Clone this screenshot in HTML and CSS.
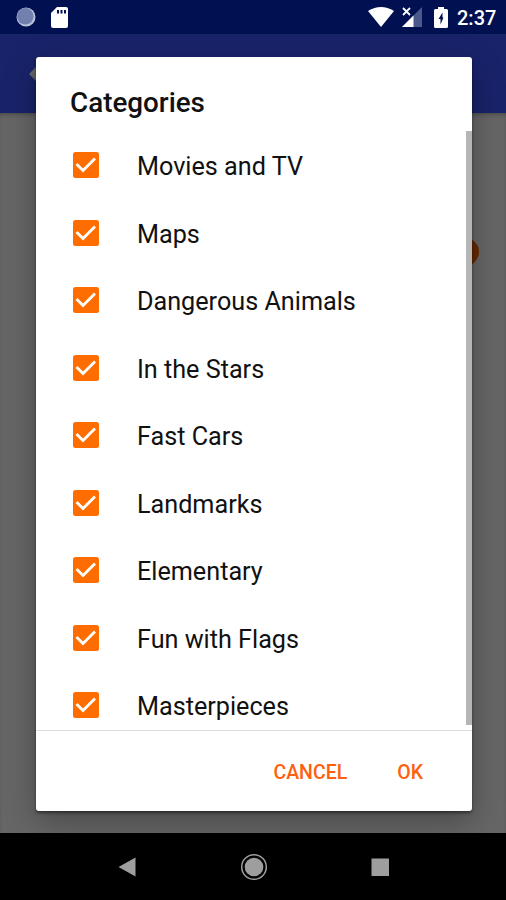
FILE: index.html
```html
<!DOCTYPE html>
<html lang="en">
<head>
<meta charset="utf-8">
<title>Categories</title>
<link rel="stylesheet" href="styles.css">
</head>
<body>
<div class="screen">
  <header class="status">
    <svg class="sync" viewBox="0 0 20 20"><circle cx="10" cy="10" r="9.5" fill="#b9c2dc"/><circle cx="9.3" cy="9.3" r="8.3" fill="#7280ad"/></svg>
    <svg class="sd" viewBox="0 0 17 21"><path d="M6 0h9q2 0 2 2v17q0 2-2 2H2q-2 0-2-2V6z" fill="#fff"/><path d="M6 3h2v3.500H6zM9.500 3h2v3.500h-2zM13 3h2v3.500h-2z" fill="#001051"/></svg>
    <span class="gap"></span>
    <svg class="wifi" viewBox="0 0 26 20"><path d="M0 4Q13-4 26 4L13 20z" fill="#fff"/></svg>
    <svg class="signal" viewBox="0 0 20 20"><path d="M20 0v20H0z" fill="#4a588c"/><path d="M11.500 8.500V20H0z" fill="#fff"/><path d="M1 1l7 7M8 1L1 8" stroke="#fff" stroke-width="1.800"/></svg>
    <svg class="battery" viewBox="0 0 14 21"><path d="M4 0h6v2h2.500Q14 2 14 3.500v16q0 1.500-1.500 1.500h-11Q0 21 0 19.500v-16Q0 2 1.500 2H4z" fill="#fff"/><path d="M8.500 5.500L4.500 12h2v5.500L9.500 10.500H8.500z" fill="#001051"/></svg>
    <span class="clock">2:37</span>
  </header>
  <div class="appbar"><svg class="back" viewBox="0 0 24 24"><path d="M11 3L2 12l9 9z" fill="#666"/></svg></div>
  <main class="page"><span class="toggle"></span></main>
  <nav class="navbar">
    <svg viewBox="0 0 28 28"><path d="M5.500 14L22.500 4.500v19z" fill="#9e9e9e"/></svg>
    <svg viewBox="0 0 28 28"><circle cx="14" cy="14" r="12.300" fill="none" stroke="#9e9e9e" stroke-width="1.500"/><circle cx="14" cy="14" r="9.300" fill="#9e9e9e"/></svg>
    <svg viewBox="0 0 28 28"><path d="M5.500 5.500h17.500v17.500H5.500z" fill="#9e9e9e"/></svg>
  </nav>
  <section class="dialog">
    <h1>Categories</h1>
    <div class="scroll">
      <ul>
        <li><svg class="check" viewBox="0 0 26 26"><rect width="26" height="26" rx="2.500"/><path d="M3.500 12l6.500 6.500L22 6.500"/></svg><span>Movies and TV</span></li>
        <li><svg class="check" viewBox="0 0 26 26"><rect width="26" height="26" rx="2.500"/><path d="M3.500 12l6.500 6.500L22 6.500"/></svg><span>Maps</span></li>
        <li><svg class="check" viewBox="0 0 26 26"><rect width="26" height="26" rx="2.500"/><path d="M3.500 12l6.500 6.500L22 6.500"/></svg><span>Dangerous Animals</span></li>
        <li><svg class="check" viewBox="0 0 26 26"><rect width="26" height="26" rx="2.500"/><path d="M3.500 12l6.500 6.500L22 6.500"/></svg><span>In the Stars</span></li>
        <li><svg class="check" viewBox="0 0 26 26"><rect width="26" height="26" rx="2.500"/><path d="M3.500 12l6.500 6.500L22 6.500"/></svg><span>Fast Cars</span></li>
        <li><svg class="check" viewBox="0 0 26 26"><rect width="26" height="26" rx="2.500"/><path d="M3.500 12l6.500 6.500L22 6.500"/></svg><span>Landmarks</span></li>
        <li><svg class="check" viewBox="0 0 26 26"><rect width="26" height="26" rx="2.500"/><path d="M3.500 12l6.500 6.500L22 6.500"/></svg><span>Elementary</span></li>
        <li><svg class="check" viewBox="0 0 26 26"><rect width="26" height="26" rx="2.500"/><path d="M3.500 12l6.500 6.500L22 6.500"/></svg><span>Fun with Flags</span></li>
        <li><svg class="check" viewBox="0 0 26 26"><rect width="26" height="26" rx="2.500"/><path d="M3.500 12l6.500 6.500L22 6.500"/></svg><span>Masterpieces</span></li>
      </ul>
      <div class="bar"></div>
    </div>
    <footer><button>CANCEL</button><button>OK</button></footer>
  </section>
</div>
</body>
</html>
```
FILE: styles.css
```css
* { box-sizing: border-box; }
body { margin: 0; font-family: Roboto, sans-serif; }
.screen { position: relative; width: 506px; height: 900px; overflow: hidden; display: flex; flex-direction: column; background: #000; }
.status { height: 34px; flex: none; display: flex; align-items: center; padding: 0 10px 0 16px; background: #001051; }
.sync { width: 20px; height: 20px; }
.sd { width: 17px; height: 21px; margin-left: 15px; }
.gap { flex: 1; }
.wifi { width: 26px; height: 20px; margin-right: 8px; }
.signal { width: 20px; height: 20px; margin-right: 12px; }
.battery { width: 14px; height: 21px; margin-right: 9px; }
.clock { color: #fff; font-size: 20px; font-weight: 500; line-height: 34px; width: 39px; white-space: nowrap; margin-top: 2px; }
.appbar { height: 79px; flex: none; display: flex; align-items: center; padding-left: 27px; background: #19236a; }
.back { width: 24px; height: 24px; }
.page { flex: 1; background: #666; box-shadow: inset 0 3px 4px -2px #444; display: flex; justify-content: flex-end; align-items: flex-start; padding: 125px 27px 0 0; }
.toggle { width: 28px; height: 28px; border-radius: 50%; background: #662800; }
.navbar { height: 67px; flex: none; background: #000; display: flex; justify-content: space-between; align-items: center; padding: 0 112px 0 113px; }
.navbar svg { width: 28px; height: 28px; }
.dialog { position: absolute; left: 36px; top: 57px; width: 435.500px; height: 753.500px; border-radius: 3px; background: #fff; box-shadow: 0 2px 3px rgba(0,0,0,.45), 0 10px 32px rgba(0,0,0,.3); display: flex; flex-direction: column; overflow: hidden; }
h1 { margin: 0; height: 74px; flex: none; padding: 29px 0 0 34px; font-size: 27.800px; line-height: 34px; font-weight: 500; color: #111; }
.scroll { height: 600px; flex: none; overflow: hidden; display: flex; justify-content: space-between; border-bottom: 1px solid #dedede; }
ul { margin: 0; padding: .4px 0 0; list-style: none; }
li { height: 67.500px; display: flex; align-items: center; padding-left: 37.400px; color: #111; font-size: 25.200px; white-space: nowrap; }
li span { padding-top: 3px; }
.check { width: 26px; height: 26px; margin-right: 37.600px; }
.check rect { fill: #ff6d00; }
.check path { fill: none; stroke: #fff; stroke-width: 2.800; }
.bar { width: 5.500px; height: 594px; background: #b5b5b5; }
footer { flex: 1; display: flex; justify-content: flex-end; align-items: center; gap: 50px; padding: 5px 48.500px 0 0; }
button { border: 0; padding: 0; background: none; color: #ff5f0f; font: 500 19.500px/24px Roboto, sans-serif; }
```
